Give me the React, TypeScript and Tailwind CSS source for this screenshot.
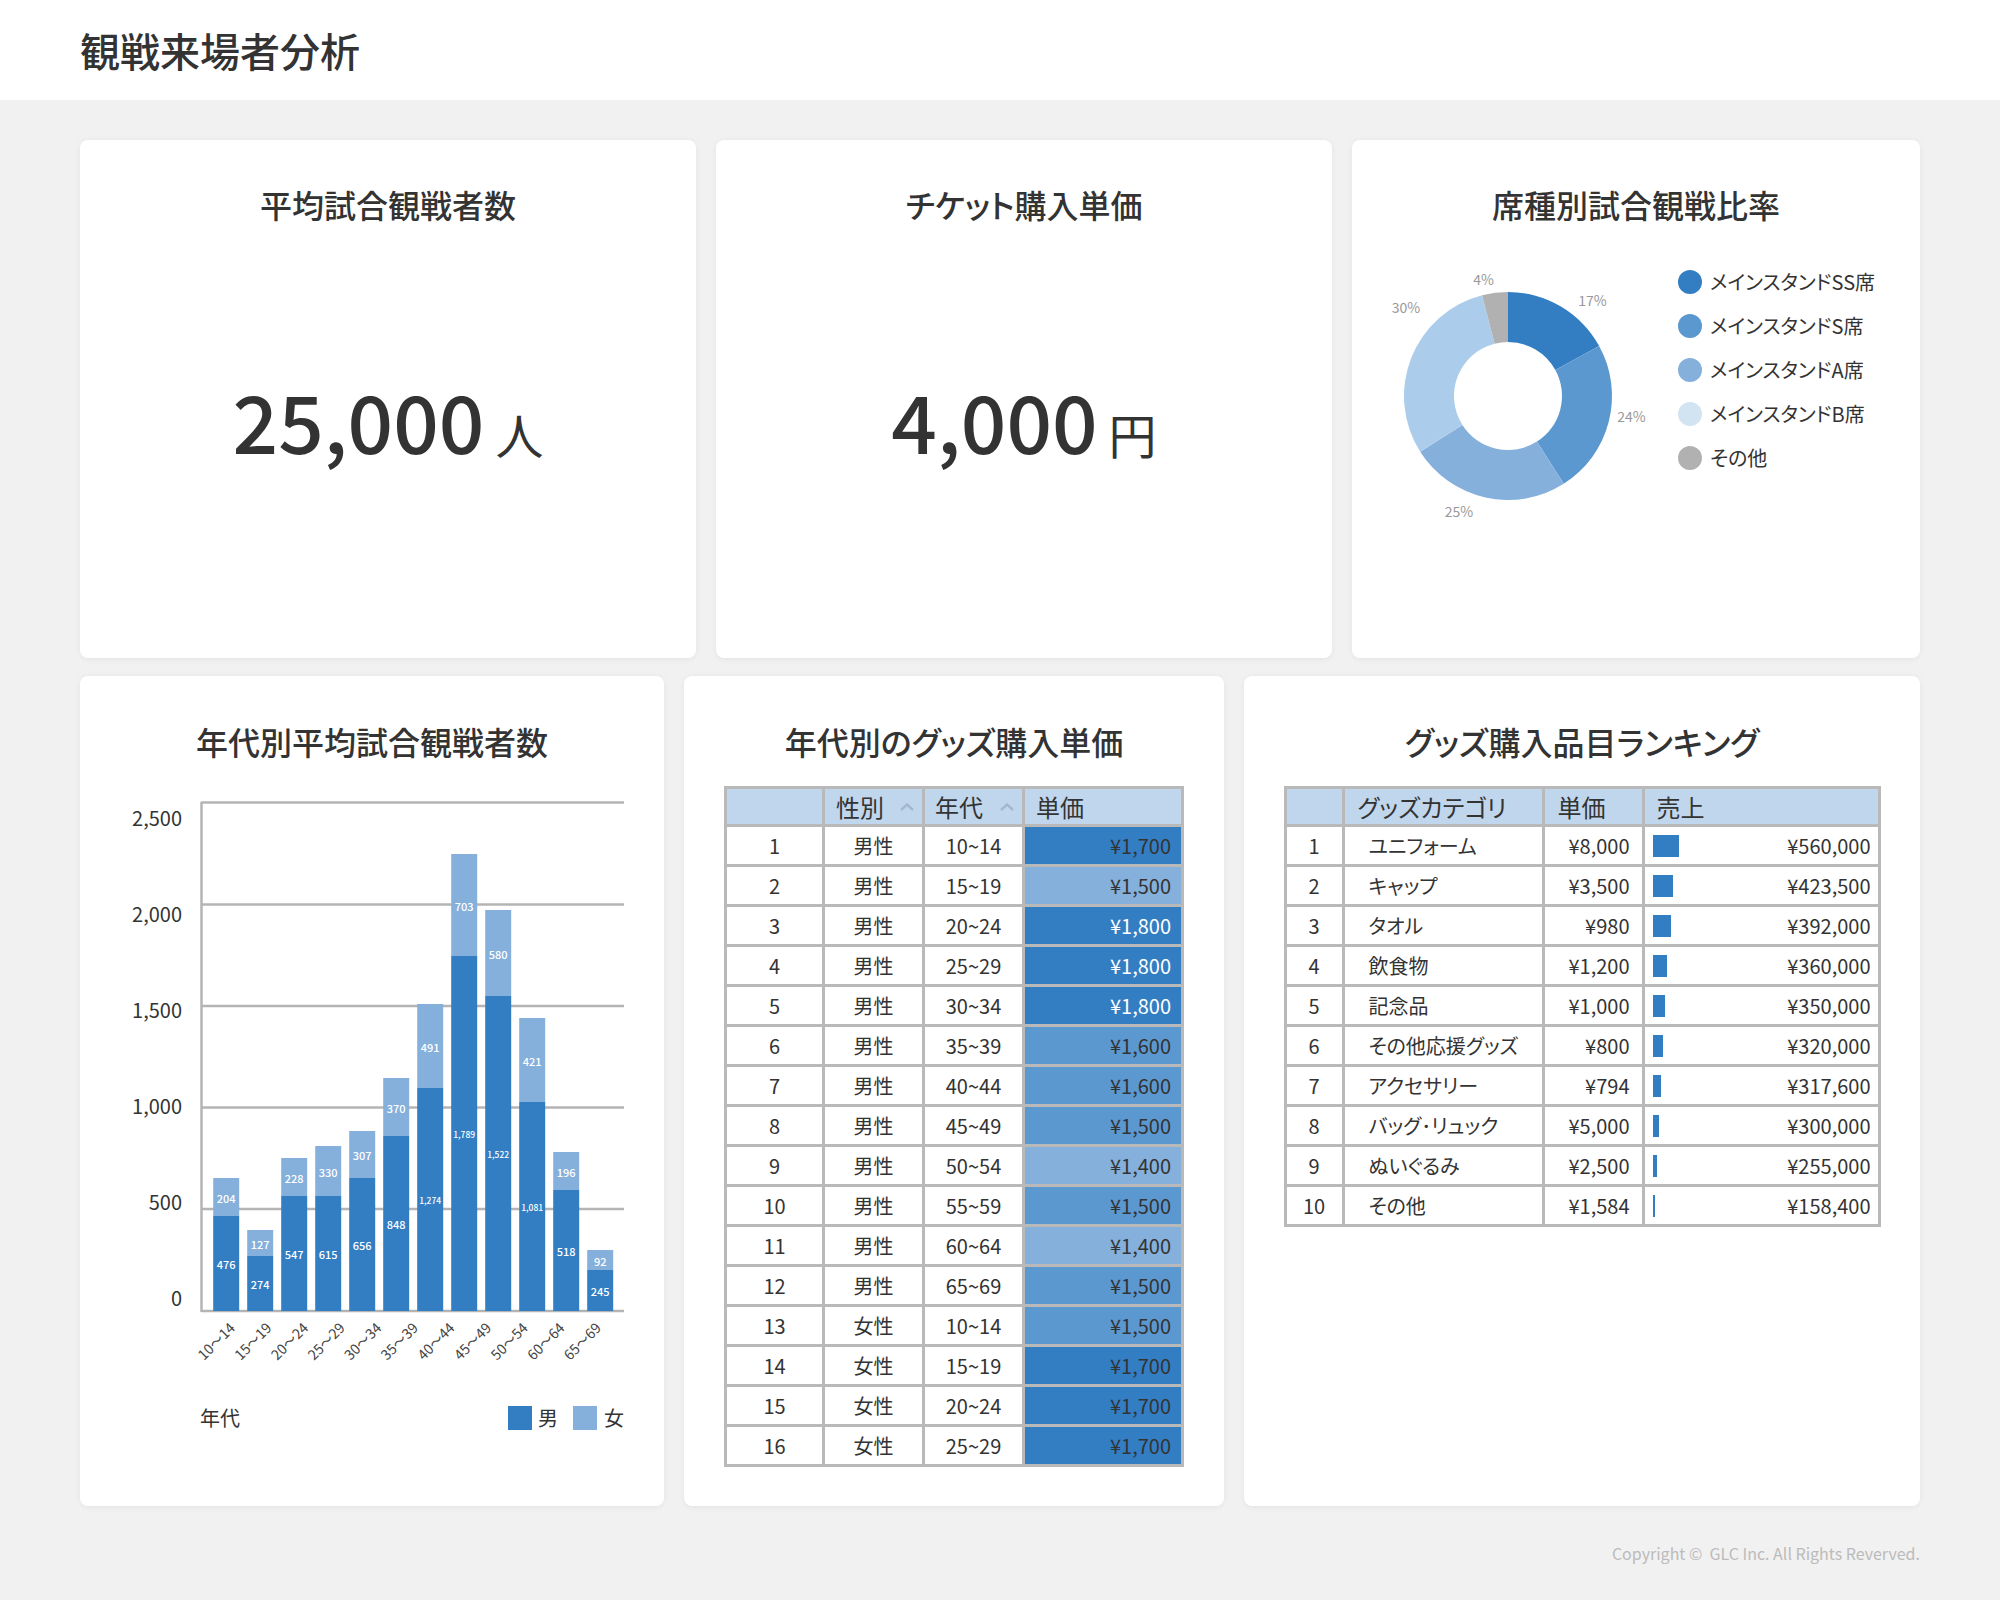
const DARK = '#337EC3'
const MID = '#5C98D0'
const LIGHT = '#85B0DC'

// top / split are measured from the picture, the drawn bars don't follow the axis scale exactly
const bars = [
  { f: 204, m: 476, top: 1178, split: 1216 },
  { f: 127, m: 274, top: 1230, split: 1256 },
  { f: 228, m: 547, top: 1158, split: 1196 },
  { f: 330, m: 615, top: 1146, split: 1196 },
  { f: 307, m: 656, top: 1131, split: 1178 },
  { f: 370, m: 848, top: 1078, split: 1136 },
  { f: 491, m: 1274, top: 1004, split: 1088 },
  { f: 703, m: 1789, top: 854, split: 956 },
  { f: 580, m: 1522, top: 910, split: 996 },
  { f: 421, m: 1081, top: 1018, split: 1102 },
  { f: 196, m: 518, top: 1152, split: 1190 },
  { f: 92, m: 245, top: 1250, split: 1270 },
]

const ageTicks = ['10〜14', '15〜19', '20〜24', '25〜29', '30〜34', '35〜39', '40〜44', '45〜49', '50〜54', '60〜64', '65〜69']

const yAxis = [
  { label: '2,500', grid: 802.5, text: 817 },
  { label: '2,000', grid: 904.5, text: 913 },
  { label: '1,500', grid: 1006, text: 1009 },
  { label: '1,000', grid: 1107.5, text: 1105 },
  { label: '500', grid: 1209, text: 1201 },
  { label: '0', grid: 1311, text: 1297 },
]

const seats = [
  { label: 'メインスタンドSS席', pct: 17, slice: '#337EC3', dot: '#337EC3', x: 1592.5, y: 300 },
  { label: 'メインスタンドS席', pct: 24, slice: '#5C98D0', dot: '#5C98D0', x: 1631.5, y: 416 },
  { label: 'メインスタンドA席', pct: 25, slice: '#85B0DC', dot: '#85B0DC', x: 1459, y: 511 },
  { label: 'メインスタンドB席', pct: 30, slice: '#ABCDEB', dot: '#D2E3F2', x: 1406, y: 307 },
  { label: 'その他', pct: 4, slice: '#B1B1B1', dot: '#B1B1B1', x: 1483.5, y: 279 },
]

const agePrices: { gender: string; age: string; price: string; bg: string; white?: boolean }[] = [
  { gender: '男性', age: '10~14', price: '¥1,700', bg: DARK },
  { gender: '男性', age: '15~19', price: '¥1,500', bg: LIGHT },
  { gender: '男性', age: '20~24', price: '¥1,800', bg: DARK, white: true },
  { gender: '男性', age: '25~29', price: '¥1,800', bg: DARK, white: true },
  { gender: '男性', age: '30~34', price: '¥1,800', bg: DARK, white: true },
  { gender: '男性', age: '35~39', price: '¥1,600', bg: MID },
  { gender: '男性', age: '40~44', price: '¥1,600', bg: MID },
  { gender: '男性', age: '45~49', price: '¥1,500', bg: MID },
  { gender: '男性', age: '50~54', price: '¥1,400', bg: LIGHT },
  { gender: '男性', age: '55~59', price: '¥1,500', bg: MID },
  { gender: '男性', age: '60~64', price: '¥1,400', bg: LIGHT },
  { gender: '男性', age: '65~69', price: '¥1,500', bg: MID },
  { gender: '女性', age: '10~14', price: '¥1,500', bg: MID },
  { gender: '女性', age: '15~19', price: '¥1,700', bg: DARK },
  { gender: '女性', age: '20~24', price: '¥1,700', bg: DARK },
  { gender: '女性', age: '25~29', price: '¥1,700', bg: DARK },
]

const ranking = [
  { name: 'ユニフォーム', unit: '¥8,000', sales: '¥560,000', bar: 26 },
  { name: 'キャップ', unit: '¥3,500', sales: '¥423,500', bar: 20 },
  { name: 'タオル', unit: '¥980', sales: '¥392,000', bar: 18 },
  { name: '飲食物', unit: '¥1,200', sales: '¥360,000', bar: 14 },
  { name: '記念品', unit: '¥1,000', sales: '¥350,000', bar: 12 },
  { name: 'その他応援グッズ', unit: '¥800', sales: '¥320,000', bar: 10 },
  { name: 'アクセサリー', unit: '¥794', sales: '¥317,600', bar: 8 },
  { name: 'バッグ･リュック', unit: '¥5,000', sales: '¥300,000', bar: 6 },
  { name: 'ぬいぐるみ', unit: '¥2,500', sales: '¥255,000', bar: 4 },
  { name: 'その他', unit: '¥1,584', sales: '¥158,400', bar: 2 },
]

function Card({ title, row2, children }: { title: string; row2?: boolean; children?: React.ReactNode }) {
  return (
    <section className="rounded-lg bg-white shadow-[0_1px_6px_rgba(0,0,0,0.06)]">
      <h2 className={`text-center text-[32px] leading-[48px] font-medium ${row2 ? 'pt-[41px]' : 'pt-10'}`}>{title}</h2>
      {children}
    </section>
  )
}

function BigValue({ value, unit }: { value: string; unit: string }) {
  return (
    <div className="mt-[141px] flex items-baseline justify-center gap-[11px]">
      <span className="text-[80px] leading-[100px] font-medium">{value}</span>
      <span className="text-[48px] leading-[60px]">{unit}</span>
    </div>
  )
}

function slicePath(from: number, to: number) {
  const cx = 1508
  const cy = 396
  const R = 104
  const r = 54
  const pt = (rad: number, p: number) => {
    const a = (p / 100) * Math.PI * 2 - Math.PI / 2
    return `${(cx + rad * Math.cos(a)).toFixed(2)} ${(cy + rad * Math.sin(a)).toFixed(2)}`
  }
  const big = to - from > 50 ? 1 : 0
  return `M${pt(R, from)} A${R} ${R} 0 ${big} 1 ${pt(R, to)} L${pt(r, to)} A${r} ${r} 0 ${big} 0 ${pt(r, from)} Z`
}

function SeatDonut() {
  let acc = 0
  return (
    <svg viewBox="1380 260 290 270" className="h-[270px] w-[290px] shrink-0">
      {seats.map((s) => {
        const d = slicePath(acc, acc + s.pct)
        acc += s.pct
        return <path key={s.label} d={d} fill={s.slice} />
      })}
      {seats.map((s) => (
        <text key={s.label} x={s.x} y={s.y} fontSize="14" fill="#999999" textAnchor="middle" dominantBaseline="central">
          {s.pct}%
        </text>
      ))}
    </svg>
  )
}

function AgeChart() {
  return (
    <svg viewBox="80 790 584 590" className="mt-[25px] block h-[590px] w-[584px]">
      {yAxis.map((t) => (
        <g key={t.label}>
          <line x1="201" x2="624" y1={t.grid} y2={t.grid} stroke="#B4B4B4" strokeWidth="2.5" />
          <text x="182" y={t.text} fontSize="20" fill="#333333" textAnchor="end" dominantBaseline="central">
            {t.label}
          </text>
        </g>
      ))}
      <line x1="201.5" x2="201.5" y1="802" y2="1312" stroke="#B4B4B4" strokeWidth="2.5" />
      {bars.map((b, i) => {
        const x = 213.2 + i * 34
        const cx = x + 13
        return (
          <g key={b.m} fill="#ffffff" textAnchor="middle" fontWeight="500">
            <rect x={x} y={b.top} width="26" height={b.split - b.top} fill={LIGHT} />
            <rect x={x} y={b.split} width="26" height={1311 - b.split} fill={DARK} />
            <text x={cx} y={(b.top + b.split) / 2 + 0.5} fontSize="11" dominantBaseline="central">
              {b.f}
            </text>
            <text x={cx} y={(b.split + 1311) / 2 + 0.5} fontSize={b.m >= 1000 ? 8.5 : 11} dominantBaseline="central">
              {b.m >= 1000 ? b.m.toLocaleString('en-US') : b.m}
            </text>
          </g>
        )
      })}
      {ageTicks.map((t, i) => {
        const x = 236 + i * 36.6
        return (
          <text key={t} x={x} y="1329" fontSize="14" fill="#444444" textAnchor="end" transform={`rotate(-45 ${x} 1329)`}>
            {t}
          </text>
        )
      })}
    </svg>
  )
}

function Chevron() {
  return (
    <svg viewBox="0 0 14 8" className="h-2 w-3.5">
      <path d="M1 7 L7 1.5 L13 7" fill="none" stroke="#A5B8CB" strokeWidth="2.4" />
    </svg>
  )
}

const th = 'h-[38px] border-[3px] border-[#B9B9B9] bg-[#C0D6EC] p-0 text-left text-2xl font-normal'
const td = 'h-10 border-[3px] border-[#B9B9B9] p-0 text-center text-xl leading-none'

function AgePriceTable() {
  return (
    <table className="mx-auto mt-[21px] w-[457px] table-fixed border-collapse">
      <colgroup>
        <col className="w-[98px]" />
        <col className="w-[100px]" />
        <col className="w-[100px]" />
        <col className="w-[159px]" />
      </colgroup>
      <thead>
        <tr>
          <th className={th} />
          <th className={th}>
            <div className="flex items-center justify-between pr-[8px] pl-[11px]">
              性別
              <Chevron />
            </div>
          </th>
          <th className={th}>
            <div className="flex items-center justify-between pr-[8px] pl-[10px]">
              年代
              <Chevron />
            </div>
          </th>
          <th className={`${th} pl-[11px]`}>単価</th>
        </tr>
      </thead>
      <tbody>
        {agePrices.map((r, i) => (
          <tr key={i}>
            <td className={td}>{i + 1}</td>
            <td className={td}>{r.gender}</td>
            <td className={td}>{r.age}</td>
            <td className={`${td} pr-[10px] text-right ${r.white ? 'text-white' : ''}`} style={{ background: r.bg }}>
              {r.price}
            </td>
          </tr>
        ))}
      </tbody>
    </table>
  )
}

function RankingTable() {
  return (
    <table className="mx-auto mt-[21px] w-[594px] table-fixed border-collapse">
      <colgroup>
        <col className="w-[58px]" />
        <col className="w-[200px]" />
        <col className="w-[100px]" />
        <col className="w-[236px]" />
      </colgroup>
      <thead>
        <tr>
          <th className={th} />
          <th className={`${th} pl-[13px]`}>グッズカテゴリ</th>
          <th className={`${th} pl-[13px]`}>単価</th>
          <th className={`${th} pl-3`}>売上</th>
        </tr>
      </thead>
      <tbody>
        {ranking.map((r, i) => (
          <tr key={r.name}>
            <td className={td}>{i + 1}</td>
            <td className={`${td} pl-6 text-left`}>{r.name}</td>
            <td className={`${td} pr-3 text-right`}>{r.unit}</td>
            <td className={td}>
              <div className="flex items-center justify-between pr-[7px] pl-2">
                <div className="h-[22px] bg-[#337EC3]" style={{ width: r.bar }} />
                <span>{r.sales}</span>
              </div>
            </td>
          </tr>
        ))}
      </tbody>
    </table>
  )
}

export default function App() {
  return (
    <div className="flex h-[1600px] flex-col bg-[#F1F1F1] font-['Noto_Sans_CJK_JP',sans-serif] text-[#333333] [font-feature-settings:'palt']">
      <header className="flex h-[100px] items-center bg-white px-20">
        <h1 className="text-[40px] leading-none font-medium">観戦来場者分析</h1>
      </header>

      <main className="flex flex-col gap-[18px] px-20 pt-10">
        <div className="grid h-[518px] grid-cols-[616px_616px_568px] gap-5">
          <Card title="平均試合観戦者数">
            <BigValue value="25,000" unit="人" />
          </Card>
          <Card title="チケット購入単価">
            <BigValue value="4,000" unit="円" />
          </Card>
          <Card title="席種別試合観戦比率">
            <div className="mt-8 flex pl-7">
              <SeatDonut />
              <ul className="mt-[10px] flex flex-col gap-5 pl-2 text-xl leading-6">
                {seats.map((s) => (
                  <li key={s.label} className="flex items-center gap-2">
                    <span className="h-6 w-6 rounded-full" style={{ background: s.dot }} />
                    {s.label}
                  </li>
                ))}
              </ul>
            </div>
          </Card>
        </div>

        <div className="grid h-[830px] grid-cols-[584px_540px_676px] gap-5">
          <Card title="年代別平均試合観戦者数" row2>
            <AgeChart />
            <div className="mt-[26px] flex items-center justify-between pr-10 pl-[120px] text-xl leading-6">
              <span>年代</span>
              <div className="flex items-center">
                <span className="mr-[6px] h-6 w-6 bg-[#337EC3]" />
                <span>男</span>
                <span className="mr-[7px] ml-[15px] h-6 w-6 bg-[#85B0DC]" />
                <span>女</span>
              </div>
            </div>
          </Card>
          <Card title="年代別のグッズ購入単価" row2>
            <AgePriceTable />
          </Card>
          <Card title="グッズ購入品目ランキング" row2>
            <RankingTable />
          </Card>
        </div>
      </main>

      <footer className="mt-[35px] px-20 text-right text-base leading-6 text-[#BBBBBB]">Copyright ©&nbsp; GLC Inc. All Rights Reverved.</footer>
    </div>
  )
}
